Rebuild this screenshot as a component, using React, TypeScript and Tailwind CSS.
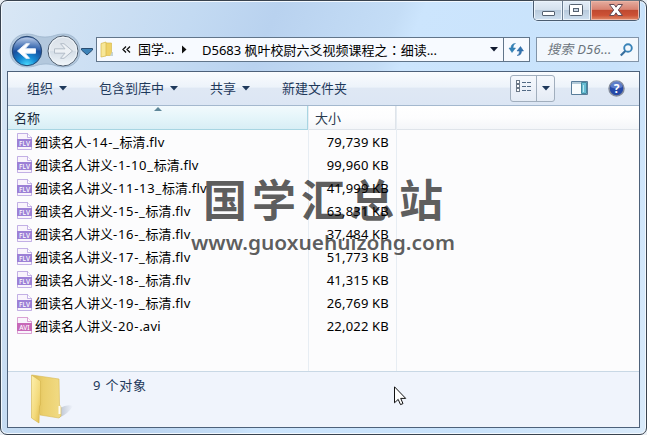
import { useState } from 'react';
import { clsx } from 'clsx';

const files = [
  { prefix: '细读名人', suffix: '-14-_', tail: '标清', ext: '.flv', size: '79,739 KB' },
  { prefix: '细读名人讲义', suffix: '-1-10_', tail: '标清', ext: '.flv', size: '99,960 KB' },
  { prefix: '细读名人讲义', suffix: '-11-13_', tail: '标清', ext: '.flv', size: '41,999 KB' },
  { prefix: '细读名人讲义', suffix: '-15-_', tail: '标清', ext: '.flv', size: '63,831 KB' },
  { prefix: '细读名人讲义', suffix: '-16-_', tail: '标清', ext: '.flv', size: '37,484 KB' },
  { prefix: '细读名人讲义', suffix: '-17-_', tail: '标清', ext: '.flv', size: '51,773 KB' },
  { prefix: '细读名人讲义', suffix: '-18-_', tail: '标清', ext: '.flv', size: '41,315 KB' },
  { prefix: '细读名人讲义', suffix: '-19-_', tail: '标清', ext: '.flv', size: '26,769 KB' },
  { prefix: '细读名人讲义', suffix: '-20-', tail: '', ext: '.avi', size: '22,022 KB' },
];

export default function App() {
  return (
    <div className="relative w-[647px] h-[435px] overflow-hidden bg-[#e9eef3] font-['Noto_Sans','Noto_Sans_CJK_SC',sans-serif] text-[13px] leading-none text-black whitespace-nowrap">
      <div className="flex flex-col h-full rounded-[7px] border border-[#39434f] bg-[linear-gradient(112deg,#d9e7f5_0%,#c3daf2_24%,#b9d2ef_34%,#c4ddf6_49%,#cce5fd_52%,#c8e2fb_78%,#d9eafa_100%)] shadow-[inset_0_0_0_1px_#f2f8fe]">
        <TitleBar />
        <NavBar />
        <div className="flex flex-col ml-[6px] mt-[9px] w-[633px] h-[357px] border border-[#4d617a] bg-[#fcfcfd]">
          <Toolbar />
          <FileList />
          <DetailsPane />
        </div>
      </div>
      <Watermark />
      <Cursor />
    </div>
  );
}

function TitleBar() {
  return (
    <div className="flex justify-end h-9 pr-[6px]">
      <div className="flex h-5 border border-t-0 border-[#4a5c70] rounded-b-[5px] overflow-hidden shadow-[0_0_2px_#fff]">
        <button className="w-[29px] border-r border-[#6b7d91] bg-[linear-gradient(#e4eef8_0%,#d5e1ed_45%,#b9cbdd_50%,#cfe0f0_100%)] shadow-[inset_0_0_0_1px_#ecf4fb]">
          <svg width="28" height="19" viewBox="0 0 28 19">
            <rect x="8.5" y="10.5" width="12" height="4" rx="0.5" fill="#fff" stroke="#566271" />
          </svg>
        </button>
        <button className="w-7 border-r border-[#6b7d91] bg-[linear-gradient(#e4eef8_0%,#d5e1ed_45%,#b9cbdd_50%,#cfe0f0_100%)] shadow-[inset_0_0_0_1px_#ecf4fb]">
          <svg width="27" height="19" viewBox="0 0 27 19">
            <rect x="6.5" y="3.5" width="13" height="11" rx="1" fill="#fff" stroke="#566271" />
            <rect x="10.5" y="7.5" width="5" height="3" fill="#cbd8e5" stroke="#566271" />
          </svg>
        </button>
        <button className="w-12 bg-[linear-gradient(#e5ada0_0%,#d88372_44%,#c04930_50%,#cc5135_75%,#e08c6a_100%)] shadow-[inset_0_0_0_1px_#eeb5a5]">
          <svg width="48" height="19" viewBox="0 0 48 19">
            <path
              d="M18.500 3.500h4.700l1.800 2.700 1.800-2.700h4.700L27.300 9l4.200 5.500h-4.700L25 11.800l-1.800 2.700h-4.700L22.700 9z"
              fill="#fff"
              stroke="#654b55"
            />
          </svg>
        </button>
      </div>
    </div>
  );
}

function NavBar() {
  return (
    <div className="flex h-[25px] pl-[7px]">
      <div className="relative w-[88px] h-[25px] shrink-0">
        <NavButtons />
      </div>
      <div className="flex w-[434px] h-[25px] border border-[#61758a] bg-[#f7faff]">
        <div className="flex items-center w-[407px] border-r border-[#61758a]">
          <svg className="ml-[3px]" width="14" height="17" viewBox="0 0 14 17">
            <path d="M5 2h6.500v12.500H5z" fill="#efd268" stroke="#d9bb52" strokeWidth=".7" />
            <path d="M1 2.500 6 1v14l-5 1z" fill="#f7e798" stroke="#d5b84e" strokeWidth=".7" />
            <path d="M12 11h1v4h-3z" fill="#c5d4d5" />
          </svg>
          <svg className="ml-[8px] mr-[7px]" width="9" height="7" viewBox="0 0 9 7" fill="none">
            <path d="M4 .5 1 3.500l3 3M8 .5 5 3.500l3 3" stroke="#111" strokeWidth="1.300" />
          </svg>
          <span className="w-[44px]">国学...</span>
          <svg width="5" height="9" viewBox="0 0 5 9">
            <path d="M0 .5v8l4.500-4z" fill="#111" />
          </svg>
          <span className="ml-[15px] w-[288px]">
            D5683 枫叶校尉六爻视频课程之
            <span className="font-['Noto_Sans_CJK_TC',sans-serif]">：</span>
            细读...
          </span>
          <Caret className="text-[#111a30]" />
        </div>
        <svg width="25" height="23" viewBox="0 0 25 23">
          <path d="M11.500 5.500Q9 6 9 10h2.500L8 14.500 5 10h2Q7 5.500 11.500 5.500z" fill="#3383b9" stroke="#2873a7" strokeWidth=".5" />
          <path d="M13 17.500Q15.500 17 15.500 13H13l3.500-4.500 3 4.500h-2Q17.500 17.500 13 17.500z" fill="#3274b1" stroke="#265e9a" strokeWidth=".5" />
        </svg>
      </div>
      <div className="flex items-center justify-between ml-[6px] w-[103px] h-[25px] pl-[10px] pr-[5px] border border-[#8194a8] bg-[#f3f8fd] text-[#6b747c] italic">
        <span className="tracking-[0.02em]">搜索 D56...</span>
        <svg width="13" height="14" viewBox="0 0 13 14" fill="none">
          <circle cx="8" cy="5" r="3.800" stroke="#3983b8" strokeWidth="1.900" />
          <path d="m5.300 8-4.500 4.600" stroke="#376f9f" strokeWidth="2.200" />
        </svg>
      </div>
    </div>
  );
}

function NavButtons() {
  return (
    <svg className="absolute left-0 -top-1" width="88" height="36" viewBox="0 0 88 36">
      <defs>
        <radialGradient id="back" cx=".5" cy="1" r=".9">
          <stop offset="0" stopColor="#4cdeff" />
          <stop offset=".35" stopColor="#158bd4" />
          <stop offset=".7" stopColor="#194e9d" />
          <stop offset="1" stopColor="#5679b4" />
        </radialGradient>
        <linearGradient id="gloss" x2="0" y2="1">
          <stop offset="0" stopColor="#c4d4ec" stopOpacity=".9" />
          <stop offset="1" stopColor="#386eb9" stopOpacity=".25" />
        </linearGradient>
        <linearGradient id="forward" x2="0" y2="1">
          <stop offset="0" stopColor="#d9e0e8" />
          <stop offset=".48" stopColor="#e3e9ef" />
          <stop offset=".52" stopColor="#d5dee7" />
          <stop offset="1" stopColor="#f2f7fb" />
        </linearGradient>
      </defs>
      <path
        d="M2 18C2 7 10 1 19 1c8 0 9 3 18 3S47 1 56 1c9 0 16 7 16 17S65 34 56 34s-9-3-18-3-10 3-19 3S2 28 2 18z"
        fill="#b3c8dd"
        stroke="#91a9c2"
        strokeWidth=".6"
      />
      <circle cx="19" cy="18" r="14.700" fill="url(#back)" stroke="#26466f" />
      <path d="M5.500 17C6 8 12 4.500 19 4.500S32 8 32.500 17q-13 4-27 0z" fill="url(#gloss)" />
      <path d="m9.500 18 8.500-7.300h3.500L17 15.800h10.500v4.400H17l4.500 5.100H18z" fill="#fff" stroke="#e8f1fb" />
      <circle cx="55" cy="18" r="15" fill="url(#forward)" stroke="#4f5d6d" />
      <circle cx="55" cy="18" r="13.800" fill="none" stroke="#eff5fa" />
      <path d="M64.500 18 56 10.700h-3.500l4.500 5.100H46.500v4.400H57l-4.500 5.100H56z" fill="#edf1f5" stroke="#b2bcc7" />
      <path d="M73.500 15.500h11v1.500L79 22l-5.500-5z" fill="#3c82b7" stroke="#294d72" />
    </svg>
  );
}

function Caret({ className }: { className?: string }) {
  return (
    <svg className={className} width="8" height="5" viewBox="0 0 8 5">
      <path d="M0 0h8L4 4.500z" fill="currentColor" />
    </svg>
  );
}

function Toolbar() {
  return (
    <div className="flex items-center h-[34px] shrink-0 border-b border-[#a4b8ce] bg-[linear-gradient(#fafcfe_0%,#edf3fa_45%,#dfe8f4_50%,#dce6f4_100%)] text-[#1e395b]">
      <button className="flex items-center gap-[6px] ml-[19px] w-[72px]">
        组织 <Caret />
      </button>
      <button className="flex items-center gap-[6px] w-[111px]">
        包含到库中 <Caret />
      </button>
      <button className="flex items-center gap-[6px] w-[72px]">
        共享 <Caret />
      </button>
      <button className="w-[228px] text-left">新建文件夹</button>
      <div className="flex w-[45px] h-[27px] border border-[#a1aebd] rounded-[3px] bg-[linear-gradient(#f6f9fd,#e4ebf5)]">
        <div className="w-[26px] border-r border-[#a1aebd]">
          <svg width="25" height="25" viewBox="0 0 25 25" fill="none">
            {[4, 8, 12].map((y) => (
              <g key={y}>
                <rect x="5.500" y={y + 0.5} width="3" height="3" fill="#fff" stroke="#6c7886" />
                <path d={`M11 ${y + 2.5}h4m1 0h4`} stroke="#536b85" />
              </g>
            ))}
          </svg>
        </div>
        <div className="flex items-center pl-[5px]">
          <Caret />
        </div>
      </div>
      <svg className="ml-[16px]" width="17" height="15" viewBox="0 0 17 15">
        <path d="M.5.500h16v13H.5z" fill="#f9fcfd" stroke="#597d9a" />
        <path d="M1 1h15v2H1z" fill="#b4cbd9" />
        <path d="M10.500 1.500h5v11h-5z" fill="#68bdd4" stroke="#42899f" />
        <path d="M12 4h1v7h-1z" fill="#b8e8f0" />
      </svg>
      <svg className="ml-[20px]" width="17" height="17" viewBox="0 0 17 17">
        <circle cx="8.500" cy="8.500" r="7.500" fill="#2549a8" stroke="#848c9c" strokeWidth="1.500" />
        <path d="M2.500 7a6 6 0 0 1 12 0q-6 3-12 0z" fill="#7593d7" opacity=".7" />
        <text x="8.500" y="13" textAnchor="middle" fontSize="12" fontWeight="700" fill="#fff">?</text>
      </svg>
    </div>
  );
}

function FileList() {
  const [selected, setSelected] = useState<number | null>(null);

  return (
    <div className="flex h-[265px] shrink-0">
      <div className="w-[301px] border-r border-[#e7edf3]">
        <div className="relative flex items-center h-6 pl-[6px] pt-px border-b border-r border-[#a8d5e2] bg-[linear-gradient(#f2fafd_0%,#e5f5fa_50%,#d8eef5_100%)] text-[#1a2a3c]">
          名称
          <svg className="absolute left-[146px] top-[1px]" width="8" height="5" viewBox="0 0 8 5">
            <path d="M0 4h8L4 0z" fill="#5e8799" />
          </svg>
        </div>
        {files.map((file, i) => (
          <div
            key={file.size}
            className={clsx('flex items-center h-[23px] pl-[9px]', selected === i && 'bg-[#d9ecfb]')}
            onClick={() => setSelected(i)}
          >
            <FileIcon kind={file.ext} />
            <span className="ml-[3px] pt-[2px]">
              {file.prefix}
              <span className="tracking-[0.055em]">{file.suffix}</span>
              {file.tail}
              <span className="tracking-[0.02em]">{file.ext}</span>
            </span>
          </div>
        ))}
      </div>
      <div className="w-[88px] border-r border-[#e7edf3]">
        <div className="flex items-center h-6 pl-[6px] pt-px border-b border-r border-[#dfe4ea] bg-[linear-gradient(#fff_0%,#fdfdfe_50%,#f4f6f9_100%)] text-[#2b3b50]">
          大小
        </div>
        {files.map((file) => (
          <div key={file.size} className="flex items-center justify-end h-[23px] pr-[7px] pt-px">
            <span className="tracking-[0.015em]">{file.size}</span>
          </div>
        ))}
      </div>
      <div className="grow h-6 border-b border-[#dfe4ea] bg-[linear-gradient(#fff_0%,#fdfdfe_50%,#f4f6f9_100%)]" />
    </div>
  );
}

function FileIcon({ kind }: { kind: string }) {
  const isAvi = kind === '.avi';

  return (
    <svg
      className={isAvi ? 'text-[#c768b8]' : 'text-[#9c80d6]'}
      width="15"
      height="17"
      viewBox="0 0 15 17"
    >
      <path d="M.5.500h10l4 4v12H.5z" fill="#f9f4fc" stroke="currentColor" strokeOpacity=".6" />
      <path d="M10.500.500v4h4" fill="#fff" stroke="currentColor" strokeOpacity=".6" />
      <path d="M0 6h15v8H0z" fill="currentColor" />
      <text x="7.500" y="12.500" textAnchor="middle" fontSize="6.500" fontWeight="500" fill="#fff">
        {isAvi ? 'AVI' : 'FLV'}
      </text>
    </svg>
  );
}

function DetailsPane() {
  return (
    <div className="flex grow border-t border-[#c9d8e5] bg-[#f0f4fc] text-[#1e395b]">
      <svg className="ml-[19px] mt-[2px]" width="52" height="52" viewBox="0 0 52 52">
        <defs>
          <linearGradient id="folder" x2="1" y2="1">
            <stop offset="0" stopColor="#fdf0ae" />
            <stop offset=".6" stopColor="#f3da7c" />
            <stop offset="1" stopColor="#dfb948" />
          </linearGradient>
          <linearGradient id="inside">
            <stop offset="0" stopColor="#d8b750" />
            <stop offset=".4" stopColor="#ebcf6c" />
            <stop offset="1" stopColor="#f1db85" />
          </linearGradient>
          <linearGradient id="shadow">
            <stop offset="0" stopColor="#8e9aae" stopOpacity=".55" />
            <stop offset="1" stopColor="#8e9aae" stopOpacity="0" />
          </linearGradient>
        </defs>
        <path d="M33 34q7-4 13-2-4 7-14 12z" fill="url(#shadow)" />
        <path d="m5 1 27 4 .5 26 1.500 2v9l-2 2-19-3z" fill="url(#inside)" stroke="#d8bb57" strokeWidth=".6" />
        <path d="M31.500 32h2v8h-2z" fill="#fffdf1" />
        <path d="m4.500 1 9 6v24l-1 1-.5 17-7.500-5z" fill="url(#folder)" stroke="#d4b34b" strokeWidth=".6" />
      </svg>
      <span className="ml-[14px] mt-[7px] tracking-[0.06em]">9 个对象</span>
    </div>
  );
}

function Watermark() {
  return (
    <div className="absolute left-[191px] top-[175px] text-[#000]/65 pointer-events-none">
      <div className="pl-[12px] font-['Noto_Sans_CJK_SC',sans-serif] font-bold text-[44px] leading-[46px] tracking-[5px]">
        国学汇总站
      </div>
      <svg className="block mt-[8px] overflow-visible text-[19px] font-semibold" width="264" height="26">
        <text x="0" y="21" textLength="264" lengthAdjust="spacingAndGlyphs" fill="currentColor">
          www.guoxuehuizong.com
        </text>
      </svg>
    </div>
  );
}

function Cursor() {
  return (
    <svg className="absolute left-[394px] top-[386px]" width="13" height="20" viewBox="0 0 13 20">
      <path d="M.5.800v16l3.700-3.400 2.300 5.200 2.500-1-2.300-5.200h5z" fill="#fff" stroke="#111" />
    </svg>
  );
}
